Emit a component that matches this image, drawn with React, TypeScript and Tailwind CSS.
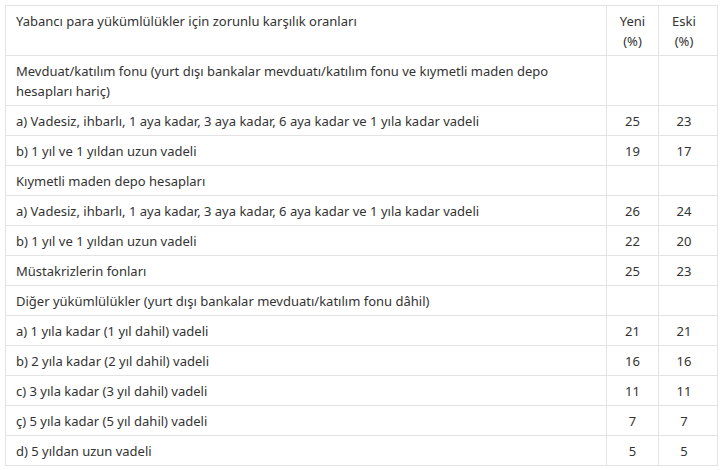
const rows: [string, string, string][] = [
  ['Mevduat/katılım fonu (yurt dışı bankalar mevduatı/katılım fonu ve kıymetli maden depo hesapları hariç)', '', ''],
  ['a) Vadesiz, ihbarlı, 1 aya kadar, 3 aya kadar, 6 aya kadar ve 1 yıla kadar vadeli', '25', '23'],
  ['b) 1 yıl ve 1 yıldan uzun vadeli', '19', '17'],
  ['Kıymetli maden depo hesapları', '', ''],
  ['a) Vadesiz, ihbarlı, 1 aya kadar, 3 aya kadar, 6 aya kadar ve 1 yıla kadar vadeli', '26', '24'],
  ['b) 1 yıl ve 1 yıldan uzun vadeli', '22', '20'],
  ['Müstakrizlerin fonları', '25', '23'],
  ['Diğer yükümlülükler (yurt dışı bankalar mevduatı/katılım fonu dâhil)', '', ''],
  ['a) 1 yıla kadar (1 yıl dahil) vadeli', '21', '21'],
  ['b) 2 yıla kadar (2 yıl dahil) vadeli', '16', '16'],
  ['c) 3 yıla kadar (3 yıl dahil) vadeli', '11', '11'],
  ['ç) 5 yıla kadar (5 yıl dahil) vadeli', '7', '7'],
  ['d) 5 yıldan uzun vadeli', '5', '5'],
];

const cell = 'border border-[#e3e3e3] pt-[5px] pb-[4px] align-top';
const label = `${cell} px-[10px]`;
const yeniCell = `${cell} px-[10px] text-center`;
const eskiCell = `${cell} pl-[10px] pr-[18px] text-center`;

export default function App() {
  return (
    <div className="bg-white p-[5px] font-['Noto_Sans',sans-serif] text-[13px] leading-[20px] text-[#333]">
      <table className="w-[712px] border-collapse table-fixed">
        <colgroup>
          <col className="w-[601px]" />
          <col className="w-[52px]" />
          <col className="w-[59px]" />
        </colgroup>
        <thead>
          <tr>
            <td className={label}>Yabancı para yükümlülükler için zorunlu karşılık oranları</td>
            <td className={yeniCell}>Yeni<br />(%)</td>
            <td className={eskiCell}>Eski<br />(%)</td>
          </tr>
        </thead>
        <tbody>
          {rows.map(([text, yeni, eski], i) => (
            <tr key={i}>
              <td className={label}>{text}</td>
              <td className={yeniCell}>{yeni}</td>
              <td className={eskiCell}>{eski}</td>
            </tr>
          ))}
        </tbody>
      </table>
    </div>
  );
}
